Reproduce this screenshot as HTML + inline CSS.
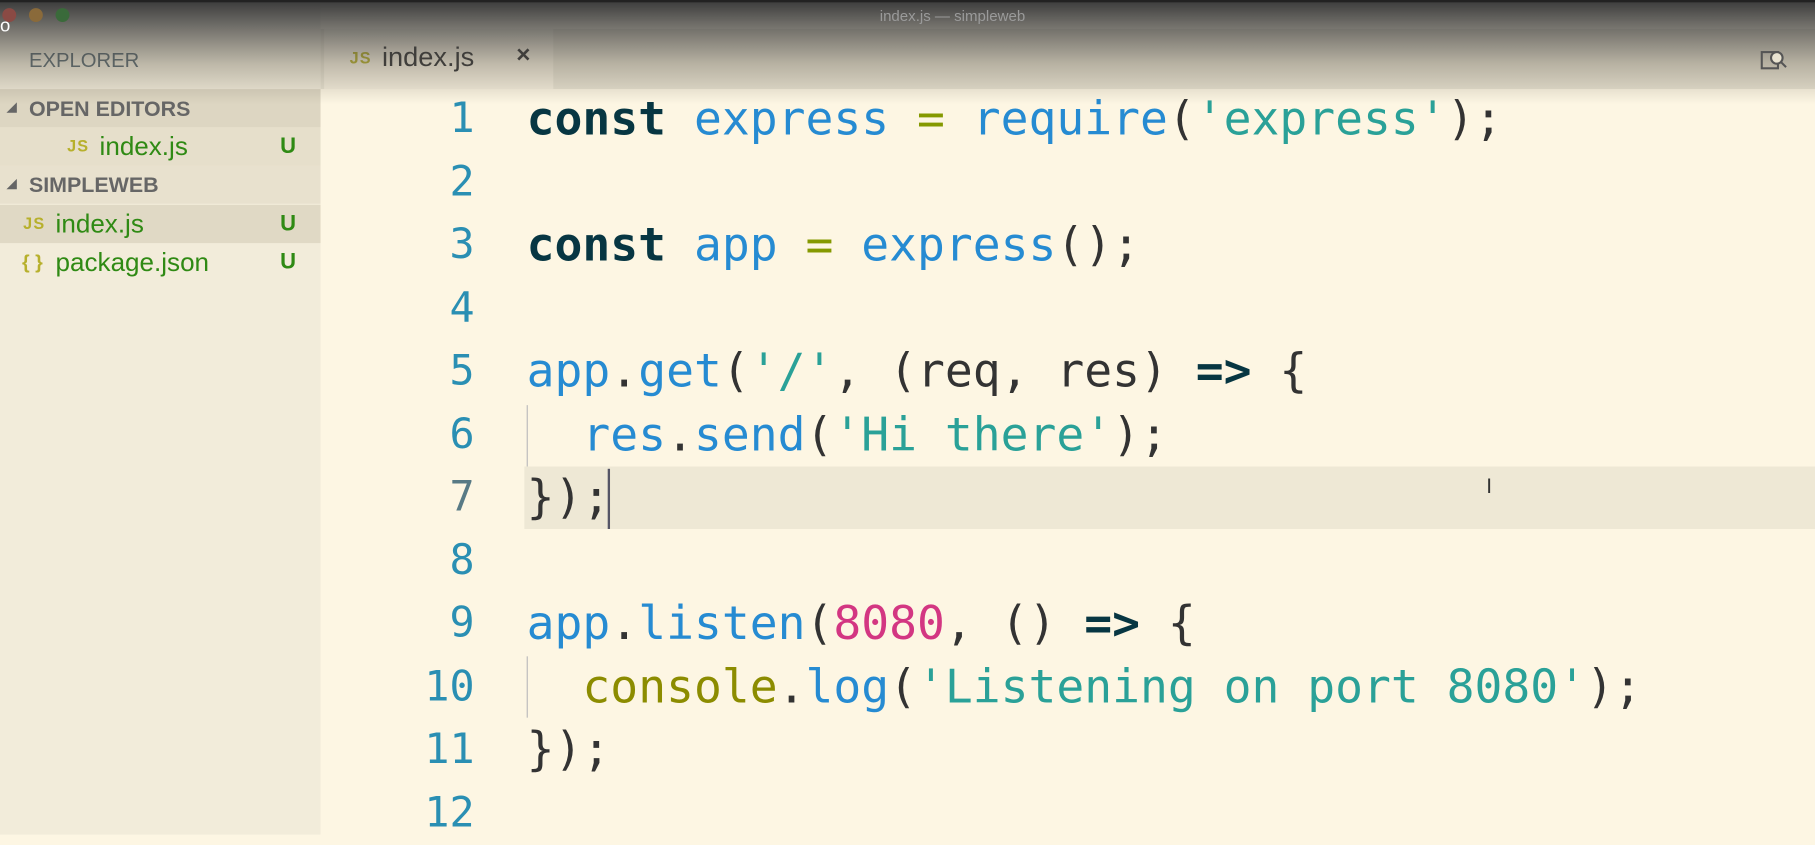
<!DOCTYPE html>
<html><head><meta charset="utf-8"><style>
html,body{margin:0;padding:0;width:1815px;height:835px;overflow:hidden;background:#fdf6e3}
#w{position:absolute;left:0;top:0;width:1568px;height:721px;transform:scale(1.15753);transform-origin:0 0;font-family:"Liberation Sans",sans-serif}
#side{position:absolute;left:0;top:0;width:277px;height:721px;background:#f2ecda}
.row{position:absolute;left:0;width:277px;height:33px;line-height:33px;font-size:22.5px;color:#2f8a14}
.hdr{font-weight:bold;font-size:18.5px;color:#666}
.u{position:absolute;left:242px;font-weight:bold;color:#2f8a14;font-size:19px}
.js{font-size:14px;color:#b7b02c;font-weight:bold;letter-spacing:1px}
#tabs{position:absolute;left:277px;top:25px;width:1291px;height:52px;background:#e9e3d1}
#tab{position:absolute;left:280px;top:25px;width:198px;height:52px;background:#f6efdd}
#ed{position:absolute;left:277px;top:77px;width:1291px;height:644px;background:#fdf6e3}
.ln{position:absolute;width:130px;text-align:right;left:280px;color:#2a8fb3;font-family:"DejaVu Sans Mono",monospace;font-size:36px;height:54.5px;line-height:54.5px}
.l{position:absolute;left:455px;height:54.5px;line-height:54.5px;font-family:"DejaVu Sans Mono",monospace;font-size:40px;white-space:pre;color:#333}
.k{color:#073642;font-weight:bold}.v{color:#268bd2}.o{color:#859900}.s{color:#2aa198}.n{color:#d33682}.c{color:#8c8c00}
#shade{position:absolute;left:0;top:0;width:1568px;height:90px;background:linear-gradient(#3a3a3a 0px,rgba(60,60,60,.75) 20px,rgba(90,85,75,.35) 55px,rgba(120,110,90,0) 90px);pointer-events:none}
</style></head><body><div id="w">
<div id="side">
 <div style="position:absolute;left:25px;top:42px;font-size:17.5px;color:#5b6a70">EXPLORER</div>
 <div class="row hdr" style="top:77px;background:#ddd6c2"><span style="position:absolute;left:6px;font-size:11px">◢</span><span style="position:absolute;left:25px">OPEN EDITORS</span></div>
 <div class="row" style="top:110px;background:#e6dfcb"><span class="js" style="position:absolute;left:58px">JS</span><span style="position:absolute;left:86px">index.js</span><span class="u">U</span></div>
 <div class="row hdr" style="top:143px;background:#e8e1ce"><span style="position:absolute;left:6px;font-size:11px">◢</span><span style="position:absolute;left:25px">SIMPLEWEB</span></div>
 <div class="row" style="top:177px;background:#e0d9c5"><span class="js" style="position:absolute;left:20px">JS</span><span style="position:absolute;left:48px">index.js</span><span class="u">U</span></div>
 <div class="row" style="top:210px"><span style="position:absolute;left:19px;color:#b7b02c;font-size:17px;font-weight:bold">{ }</span><span style="position:absolute;left:48px">package.json</span><span class="u">U</span></div>
</div>
<div id="tabs"></div>
<div id="tab"><span class="js" style="position:absolute;left:22px;top:17px">JS</span><span style="position:absolute;left:50px;top:11px;font-size:23.5px;color:#333">index.js</span><span style="position:absolute;left:166px;top:11px;font-size:21px;font-weight:bold;color:#333">×</span></div>
<div id="ed"></div>
<div style="position:absolute;left:453px;top:403px;width:1115px;height:54px;background:#eee8d5"></div>
<div style="position:absolute;left:455px;top:350px;width:1px;height:53px;background:#bbb"></div>
<div style="position:absolute;left:455px;top:567px;width:1px;height:53px;background:#bbb"></div>
<div style="position:absolute;left:525px;top:405px;width:2px;height:52px;background:#556"></div>
<div class="ln" style="top:76px">1</div><div class="ln" style="top:130.5px">2</div><div class="ln" style="top:185px">3</div><div class="ln" style="top:239.5px">4</div><div class="ln" style="top:294px">5</div><div class="ln" style="top:348.5px">6</div><div class="ln" style="top:403px;color:#587a85">7</div><div class="ln" style="top:457.5px">8</div><div class="ln" style="top:512px">9</div><div class="ln" style="top:566.5px">10</div><div class="ln" style="top:621px">11</div><div class="ln" style="top:675.5px">12</div>
<div class="l" style="top:76px"><span class="k">const</span> <span class="v">express</span> <span class="o">=</span> <span class="v">require</span>(<span class="s">'express'</span>);</div>
<div class="l" style="top:185px"><span class="k">const</span> <span class="v">app</span> <span class="o">=</span> <span class="v">express</span>();</div>
<div class="l" style="top:294px"><span class="v">app</span>.<span class="v">get</span>(<span class="s">'/'</span>, (req, res) <span class="k">=&gt;</span> {</div>
<div class="l" style="top:348.5px">  <span class="v">res</span>.<span class="v">send</span>(<span class="s">'Hi there'</span>);</div>
<div class="l" style="top:403px">});</div>
<div class="l" style="top:512px"><span class="v">app</span>.<span class="v">listen</span>(<span class="n">8080</span>, () <span class="k">=&gt;</span> {</div>
<div class="l" style="top:566.5px">  <span class="c">console</span>.<span class="v">log</span>(<span class="s">'Listening on port 8080'</span>);</div>
<div class="l" style="top:621px">});</div>
<div style="position:absolute;left:1284px;top:410px;font-size:18px;color:#333">I</div>
<div id="shade"></div>
<div style="position:absolute;left:0;top:0;width:1568px;height:2px;background:#222"></div>
<div style="position:absolute;left:2px;top:7px;width:12px;height:12px;border-radius:50%;background:#8a4a44"></div>
<div style="position:absolute;left:25px;top:7px;width:12px;height:12px;border-radius:50%;background:#8a6a3a"></div>
<div style="position:absolute;left:48px;top:7px;width:12px;height:12px;border-radius:50%;background:#3a6a3a"></div>
<div style="position:absolute;left:0;top:14px;color:#fff;font-size:16px">o</div>
<div style="position:absolute;left:760px;top:6px;font-size:13px;color:#9a9a9a">index.js — simpleweb</div>
<svg style="position:absolute;left:1520px;top:41px" width="26" height="22" viewBox="0 0 26 22" fill="none" stroke="#555" stroke-width="1.8"><rect x="2" y="4" width="14" height="14"/><circle cx="15" cy="9" r="5" fill="#e9e3d1"/><line x1="18.5" y1="12.5" x2="23" y2="17"/></svg>
</div></body></html>
